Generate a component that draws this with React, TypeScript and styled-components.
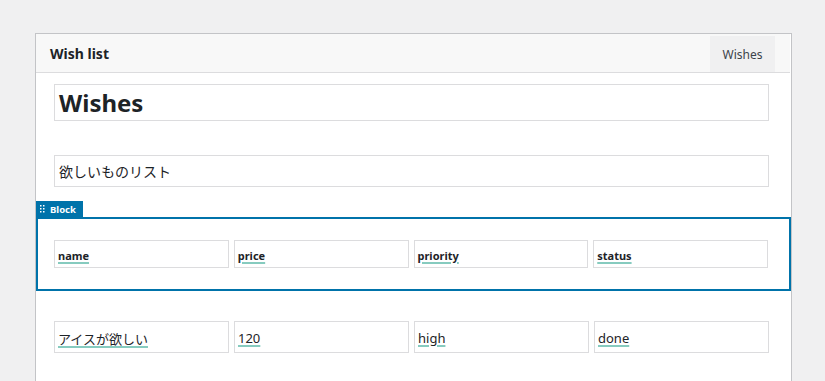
import styled, { createGlobalStyle } from 'styled-components';

const GlobalStyle = createGlobalStyle`
    html, body {
        margin: 0;
        padding: 0;
        background: #f0f0f1;
        font-family: "Noto Sans", "Noto Sans CJK JP", sans-serif;
        color: #1d2327;
    }
`

const Panel = styled.div`
    margin: 33px 0 0 35px;
    width: 755px;
    min-height: 360px;
    background: #fff;
    border: 1px solid #c3c4c7;
    border-bottom: none;
`

const PanelHeader = styled.div`
    display: flex;
    align-items: flex-end;
    justify-content: space-between;
    height: 38px;
    background: #f8f8f8;
    border-bottom: 1px solid #dcdcde;
    margin-right: 1px;
`

const PanelTitle = styled.h2`
    margin: 0;
    align-self: center;
    padding-left: 14px;
    font-size: 14px;
    font-weight: 700;
    color: #1d2327;
`

const Tab = styled.div`
    display: flex;
    align-items: center;
    justify-content: center;
    width: 65px;
    height: 36px;
    margin-right: 15px;
    background: #f0f0f1;
    font-size: 12px;
    color: #3c434a;
`

const PanelBody = styled.div`
    padding: 11px 0 0;
`

const Field = styled.div<{ $size: 'title' | 'sub' }>`
    display: flex;
    align-items: center;
    box-sizing: border-box;
    margin: ${p => p.$size === 'title' ? '0 22px 34px 18px' : '0 22px 14px 18px'};
    height: ${p => p.$size === 'title' ? '37px' : '32px'};
    padding-left: 4px;
    border: 1px solid #dcdcde;
    font-size: ${p => p.$size === 'title' ? '24px' : '14px'};
    font-weight: ${p => p.$size === 'title' ? 700 : 400};
    color: #1d2327;
`

const BlockLabel = styled.div`
    display: flex;
    align-items: center;
    gap: 5px;
    width: fit-content;
    height: 16px;
    padding: 0 7px 0 4px;
    background: #0073aa;
    color: #fff;
    font-size: 9.5px;
    font-weight: 700;
`

const Block = styled.div`
    border: 2px solid #0073aa;
    padding: 21px 21px 21px 16px;
`

const Row = styled.div<{ $tall?: boolean }>`
    display: grid;
    grid-template-columns: repeat(4, 1fr);
    gap: 5px;
    margin: ${p => p.$tall ? '30px 22px 0 18px' : '0'};
`

const Cell = styled.div<{ $head?: boolean }>`
    display: flex;
    align-items: center;
    box-sizing: border-box;
    height: ${p => p.$head ? '28px' : '32px'};
    padding: 2px 0 0 3px;
    border: 1px solid #dcdcde;
    font-size: ${p => p.$head ? '11px' : '13px'};
    font-weight: ${p => p.$head ? 700 : 400};
    color: #1d2327;
`

const Underlined = styled.span`
    text-decoration: underline;
    text-decoration-color: #86cbbf;
    text-decoration-thickness: 2px;
    text-underline-offset: 2px;
`

function DragHandle() {
    return <svg width="5" height="8" viewBox="0 0 5 8">
        {[0, 3, 6].map(y => [0, 3].map(x =>
            <rect key={`${x}-${y}`} x={x} y={y} width="1.5" height="1.5" fill="#fff" />
        ))}
    </svg>
}

const columns = ['name', 'price', 'priority', 'status']
const wishes = [['アイスが欲しい', '120', 'high', 'done']]

export default function App() {
    return <>
        <GlobalStyle />
        <Panel>
            <PanelHeader>
                <PanelTitle>Wish list</PanelTitle>
                <Tab>Wishes</Tab>
            </PanelHeader>
            <PanelBody>
                <Field $size='title'>Wishes</Field>
                <Field $size='sub'>欲しいものリスト</Field>
                <BlockLabel>
                    <DragHandle />
                    Block
                </BlockLabel>
                <Block>
                    <Row>
                        {columns.map(c => <Cell key={c} $head>
                            <Underlined>{c}</Underlined>
                        </Cell>)}
                    </Row>
                </Block>
                {wishes.map((w, i) => <Row key={i} $tall>
                    {w.map((v, j) => <Cell key={j}>
                        <Underlined>{v}</Underlined>
                    </Cell>)}
                </Row>)}
            </PanelBody>
        </Panel>
    </>
}
